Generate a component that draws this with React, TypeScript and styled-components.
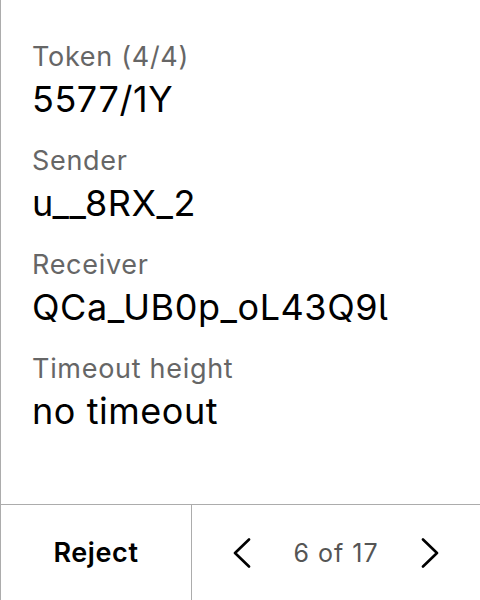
import React from "react";
import styled, { createGlobalStyle } from "styled-components";

const GlobalStyle = createGlobalStyle`
  html, body {
    margin: 0;
    padding: 0;
    background: #ffffff;
  }
  body {
    font-family: Inter, "Noto Sans", "Liberation Sans", sans-serif;
    font-feature-settings: "cv05";
  }
  * { box-sizing: border-box; }
`;

const Frame = styled.div`
  width: 480px;
  height: 600px;
  display: flex;
  flex-direction: column;
  border-left: 1px solid #acacac;
  background: #fff;
`;

const Details = styled.div`
  flex: 1;
  display: flex;
  flex-direction: column;
  gap: 22px;
  padding: 39px 31px 0;
`;

const Field = styled.div`
  display: flex;
  flex-direction: column;
  gap: 2px;
`;

const Label = styled.div`
  font-size: 27px;
  line-height: 36px;
  letter-spacing: 0.7px;
  color: #666666;
`;

const Value = styled.div`
  font-size: 36px;
  line-height: 44px;
  letter-spacing: 0.55px;
  color: #000000;
`;

const Footer = styled.div`
  height: 96px;
  display: flex;
  border-top: 1px solid #acacac;
`;

const RejectButton = styled.button`
  width: 191px;
  border: none;
  border-right: 1px solid #acacac;
  background: transparent;
  font-family: inherit;
  font-feature-settings: inherit;
  font-size: 27px;
  font-weight: 600;
  letter-spacing: 0.6px;
  color: #000;
  padding: 0;
  cursor: pointer;
`;

const Pager = styled.div`
  flex: 1;
  display: flex;
  align-items: center;
  justify-content: space-between;
  padding: 0 34px;
`;

const NavButton = styled.button`
  width: 32px;
  height: 32px;
  display: flex;
  align-items: center;
  justify-content: center;
  border: none;
  background: transparent;
  padding: 0;
  cursor: pointer;
`;

const PageText = styled.span`
  font-size: 25px;
  letter-spacing: 1px;
  color: #555555;
`;

const Chevron = ({ dir }: { dir: "left" | "right" }) => (
  <svg width="20" height="30" viewBox="0 0 20 30" fill="none">
    <polyline
      points={dir === "left" ? "17,1.5 3,15 17,28.5" : "3,1.5 17,15 3,28.5"}
      stroke="#000"
      strokeWidth="2.6"
      strokeLinecap="round"
      strokeLinejoin="round"
    />
  </svg>
);

const fields = [
  { label: "Token (4/4)", value: "5577/1Y" },
  { label: "Sender", value: "u__8RX_2" },
  { label: "Receiver", value: "QCa_UB0p_oL43Q9l" },
  { label: "Timeout height", value: "no timeout" },
];

export default function App() {
  return (
    <>
      <GlobalStyle />
      <Frame>
        <Details>
          {fields.map((f) => (
            <Field key={f.label}>
              <Label>{f.label}</Label>
              <Value>{f.value}</Value>
            </Field>
          ))}
        </Details>
        <Footer>
          <RejectButton>Reject</RejectButton>
          <Pager>
            <NavButton aria-label="Previous">
              <Chevron dir="left" />
            </NavButton>
            <PageText>6 of 17</PageText>
            <NavButton aria-label="Next">
              <Chevron dir="right" />
            </NavButton>
          </Pager>
        </Footer>
      </Frame>
    </>
  );
}
